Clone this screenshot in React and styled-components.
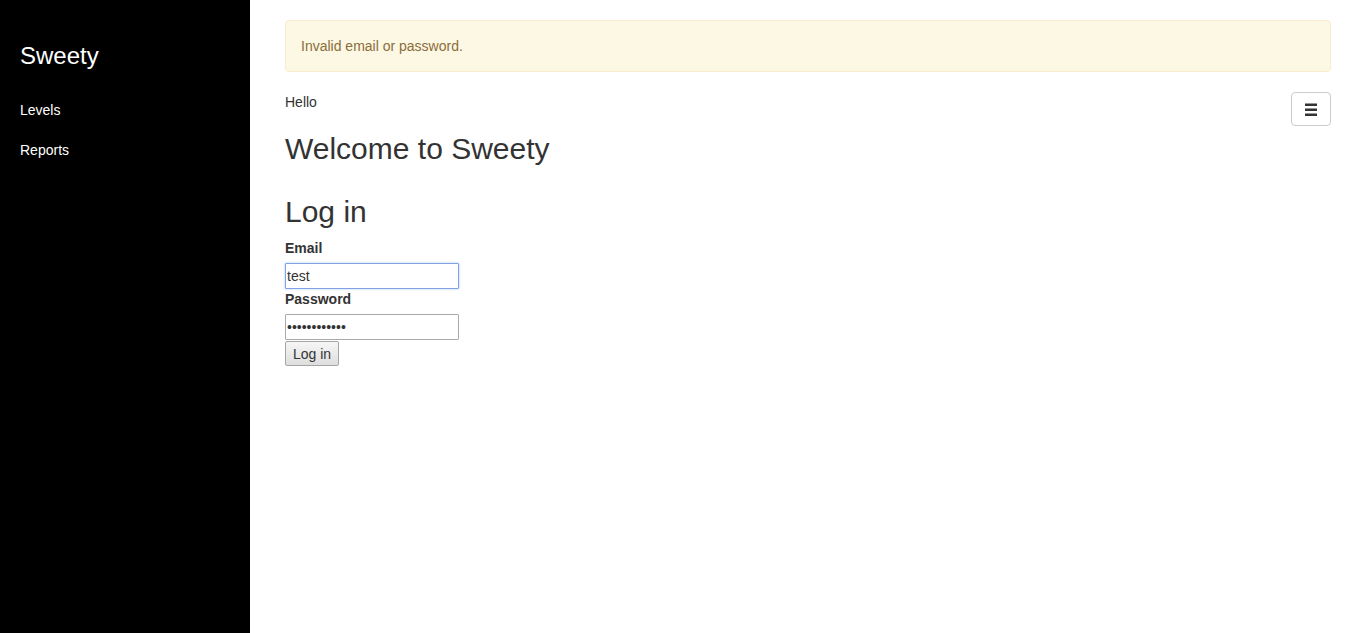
import React from "react";
import styled, { createGlobalStyle } from "styled-components";

const Global = createGlobalStyle`
  html, body { margin: 0; padding: 0; height: 100%; }
  body {
    font-family: "Liberation Sans", Arial, Helvetica, sans-serif;
    font-size: 14px;
    line-height: 1.42857143;
    color: #333;
    background: #fff;
  }
  * { box-sizing: border-box; }
`;

const Layout = styled.div`
  display: flex;
  min-height: 633px;
`;

const Sidebar = styled.nav`
  width: 250px;
  flex: 0 0 250px;
  background: #000;
  color: #fff;
  padding: 20px 20px;
`;

const Brand = styled.div`
  font-size: 24px;
  line-height: 33px;
  height: 33px;
  margin-top: 19px;
  margin-bottom: 18px;
  color: #fff;
`;

const NavList = styled.ul`
  list-style: none;
  margin: 0;
  padding: 0;
`;

const NavItem = styled.li`
  line-height: 20px;
  padding: 10px 0;
  color: #fff;
`;

const Main = styled.main`
  flex: 1;
  padding: 20px 35px 0 35px;
`;

const Alert = styled.div`
  padding: 15px;
  margin-bottom: 20px;
  border: 1px solid #faebcc;
  border-radius: 4px;
  background: #fcf8e3;
  color: #8a6d3b;
`;

const TopRow = styled.div`
  display: flex;
  justify-content: space-between;
  align-items: flex-start;
  height: 40px;
`;

const Hello = styled.div`
  line-height: 20px;
`;

const ToggleButton = styled.button`
  width: 40px;
  height: 34px;
  padding: 0;
  background: #fff;
  border: 1px solid #ccc;
  border-radius: 4px;
  display: flex;
  align-items: center;
  justify-content: center;
  cursor: pointer;
`;

const Heading = styled.h2`
  font-family: "Liberation Sans", Arial, Helvetica, sans-serif;
  font-size: 30px;
  font-weight: 500;
  line-height: 1.1;
  margin: ${(p) => (p.$first ? "0 0 30px" : "0 0 10px")};
  color: #333;
`;

const Form = styled.form`
  display: flex;
  flex-direction: column;
  align-items: flex-start;
`;

const Label = styled.label`
  font-weight: 700;
  margin-bottom: 5px;
  line-height: 20px;
`;

const Input = styled.input`
  width: 174px;
  height: 26px;
  padding: 1px 1px;
  font-family: "Liberation Sans", Arial, sans-serif;
  font-size: 14px;
  line-height: 20px;
  color: #333;
  background: #fff;
  border: 1px solid ${(p) => (p.$focused ? "#7fa3e6" : "#a9a9a9")};
  box-shadow: ${(p) => (p.$focused ? "0 0 2px rgba(80,140,230,0.6)" : "none")};
  border-radius: 1px;
  outline: none;
`;

const SubmitButton = styled.button`
  margin-top: 1px;
  height: 25px;
  padding: 1px 7px;
  font-family: "Liberation Sans", Arial, sans-serif;
  font-size: 14px;
  line-height: 20px;
  color: #333;
  border: 1px solid #a6a6a6;
  border-radius: 2px;
  background: linear-gradient(#f6f6f6, #dedede);
`;

function Hamburger() {
  return (
    <svg width="12" height="13" viewBox="0 0 12 13">
      <rect x="0" y="0.5" width="12" height="2.5" fill="#333" />
      <rect x="0" y="5.5" width="12" height="2.5" fill="#333" />
      <rect x="0" y="10.5" width="12" height="2.5" fill="#333" />
    </svg>
  );
}

export default function App() {
  return (
    <>
      <Global />
      <Layout>
        <Sidebar>
          <Brand>Sweety</Brand>
          <NavList>
            <NavItem>Levels</NavItem>
            <NavItem>Reports</NavItem>
          </NavList>
        </Sidebar>
        <Main>
          <Alert>Invalid email or password.</Alert>
          <TopRow>
            <Hello>Hello</Hello>
            <ToggleButton type="button" aria-label="menu">
              <Hamburger />
            </ToggleButton>
          </TopRow>
          <Heading $first>Welcome to Sweety</Heading>
          <Heading>Log in</Heading>
          <Form onSubmit={(e) => e.preventDefault()}>
            <Label>Email</Label>
            <Input $focused type="text" defaultValue="test" />
            <Label>Password</Label>
            <Input type="password" defaultValue="............" />
            <SubmitButton type="submit">Log in</SubmitButton>
          </Form>
        </Main>
      </Layout>
    </>
  );
}
